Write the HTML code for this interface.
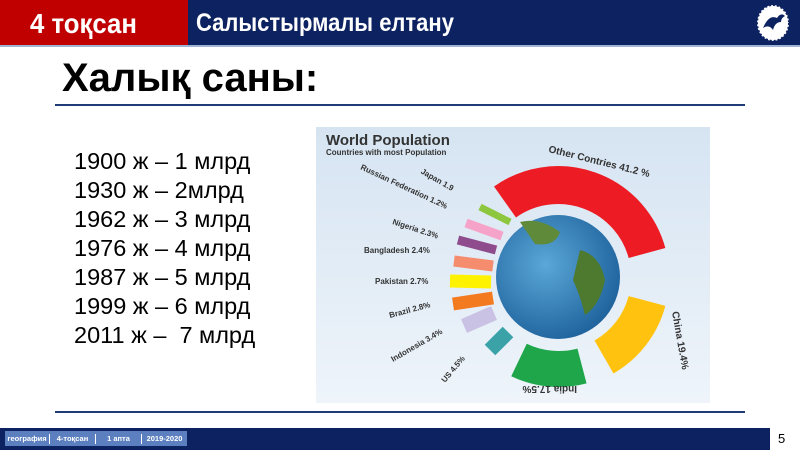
<!DOCTYPE html>
<html><head><meta charset="utf-8"><style>
body{margin:0;width:800px;height:450px;position:relative;overflow:hidden;background:#fff;font-family:"Liberation Sans",Arial,sans-serif}
.a{position:absolute}
</style></head><body>
<div class="a" style="left:0;top:0;width:188px;height:45px;background:#c00000"></div>
<div class="a" style="left:188px;top:0;width:612px;height:45px;background:#0d2260"></div>
<div class="a" style="left:0;top:45px;width:800px;height:2px;background:#9fb3d6"></div>
<div class="a" style="left:30px;top:8px;color:#fff;font-weight:bold;font-size:28px;transform:scaleX(0.92);transform-origin:left">4 тоқсан</div>
<div class="a" style="left:196px;top:9px;color:#fff;font-weight:bold;font-size:25px;transform:scaleX(0.88);transform-origin:left">Салыстырмалы елтану</div>
<svg class="a" style="left:755px;top:4px" width="36" height="38" viewBox="0 0 36 38"><ellipse cx="18" cy="19" rx="16" ry="18" fill="#fff" stroke="#0d2260" stroke-width="2" stroke-dasharray="2 2"/><path d="M8 24 q6-14 14-10 q4-6 8-2 q-4 2-4 6 q-6 0-8 8 q-4-6-10-2z" fill="#0d2260"/></svg>
<div class="a" style="left:62px;top:56px;color:#000;font-weight:bold;font-size:40px">Халық саны:</div>
<div class="a" style="left:55px;top:104px;width:690px;height:2px;background:#1f3b78"></div>
<div class="a" style="left:74px;top:147px;font-size:23.5px;line-height:29px;color:#000">1900 ж – 1 млрд<br>1930 ж – 2млрд<br>1962 ж – 3 млрд<br>1976 ж – 4 млрд<br>1987 ж – 5 млрд<br>1999 ж – 6 млрд<br>2011 ж –&nbsp; 7 млрд</div>
<svg class="a" style="left:316px;top:127px" width="394" height="276" viewBox="316 127 394 276">
<defs><linearGradient id="bg" x1="0" y1="0" x2="0" y2="1"><stop offset="0" stop-color="#d6e4f2"/><stop offset="1" stop-color="#eef4fa"/></linearGradient>
<radialGradient id="gl" cx="0.4" cy="0.4" r="0.7"><stop offset="0" stop-color="#5aa7d8"/><stop offset="1" stop-color="#1a5d98"/></radialGradient></defs>
<rect x="316" y="127" width="394" height="276" fill="url(#bg)"/>
<text x="326" y="145" font-size="15" font-weight="bold" fill="#333">World Population</text>
<text x="326" y="155" font-size="8" font-weight="bold" fill="#333">Countries with most Population</text>
<g fill="none">
<path d="M505 202 A92 92 0 0 1 647 253" stroke="#ed1c24" stroke-width="38"/>
<path d="M647 301 A92 92 0 0 1 604 357" stroke="#ffc20e" stroke-width="38"/>
<path d="M582 366 A92 92 0 0 1 519 360" stroke="#1fa64a" stroke-width="36"/>
<path d="M508 332 L490 350" stroke="#3ba3a8" stroke-width="15"/>
<path d="M494 313 L464 326" stroke="#c9c2e4" stroke-width="15"/>
<path d="M493 298 L453 304" stroke="#f47a20" stroke-width="13"/>
<path d="M491 282 L450 281" stroke="#fff200" stroke-width="13"/>
<path d="M493 266 L454 261" stroke="#f58c6e" stroke-width="11"/>
<path d="M496 250 L458 240" stroke="#8e4c8c" stroke-width="9"/>
<path d="M502 236 L466 223" stroke="#f6a3c9" stroke-width="9"/>
<path d="M510 222 L480 207" stroke="#8dc63f" stroke-width="7"/>
</g>
<circle cx="558" cy="277" r="62" fill="url(#gl)"/>
<path d="M580 250 q20 5 25 30 q-5 25 -20 35 q-5 -20 -12 -35 z" fill="#4d7a2e"/>
<path d="M520 222 q20 -5 40 10 q-5 15 -25 12 z" fill="#5e8a3a"/>
<g font-size="8" font-weight="bold" fill="#333">
<text x="548" y="152" transform="rotate(14 548 152)" font-size="10">Other Contries 41.2 %</text>
<text x="436" y="182" transform="rotate(30 436 182)" text-anchor="middle">Japan 1.9</text>
<text x="360" y="169" transform="rotate(25 360 169)">Russian Federation 1.2%</text>
<text x="392" y="224" transform="rotate(18 392 224)">Nigeria 2.3%</text>
<text x="364" y="253">Bangladesh 2.4%</text>
<text x="375" y="284">Pakistan 2.7%</text>
<text x="390" y="318" transform="rotate(-15 390 318)">Brazil 2.8%</text>
<text x="393" y="362" transform="rotate(-30 393 362)">Indonesia 3.4%</text>
<text x="445" y="383" transform="rotate(-50 445 383)">US 4.5%</text>
<text x="577" y="386" transform="rotate(180 577 386)" font-size="10">India 17.5%</text>
<text x="672" y="312" transform="rotate(80 672 312)" font-size="10">China 19.4%</text>
</g>
</svg>
<div class="a" style="left:55px;top:411px;width:690px;height:2px;background:#1f3b78"></div>
<div class="a" style="left:0;top:428px;width:770px;height:22px;background:#0d2260"></div>
<div class="a" style="left:5px;top:431px;width:182px;height:15px;background:#5c7fbf"></div>
<div class="a" style="left:5px;top:434px;width:182px;font-size:7.5px;font-weight:bold;color:#fff;display:flex;line-height:10px">
<span style="width:44px;text-align:center;border-right:1px solid #fff">география</span>
<span style="width:45px;text-align:center;border-right:1px solid #fff">4-тоқсан</span>
<span style="width:45px;text-align:center;border-right:1px solid #fff">1 апта</span>
<span style="width:45px;text-align:center">2019-2020</span></div>
<div class="a" style="left:778px;top:431px;font-size:13px;color:#000">5</div>
</body></html>
